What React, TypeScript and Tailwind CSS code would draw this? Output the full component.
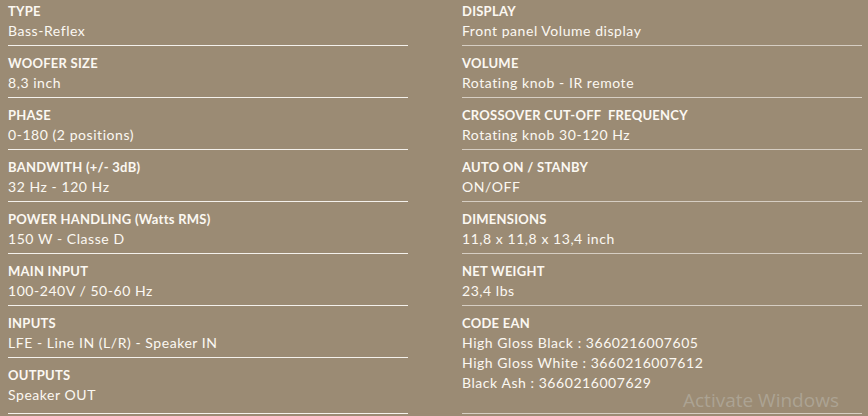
import React from 'react';

type Spec = {
  label: string;
  values: string[];
};

const leftSpecs: Spec[] = [
  { label: 'TYPE', values: ['Bass-Reflex'] },
  { label: 'WOOFER SIZE', values: ['8,3 inch'] },
  { label: 'PHASE', values: ['0-180 (2 positions)'] },
  { label: 'BANDWITH (+/- 3dB)', values: ['32 Hz - 120 Hz'] },
  { label: 'POWER HANDLING (Watts RMS)', values: ['150 W - Classe D'] },
  { label: 'MAIN INPUT', values: ['100-240V / 50-60 Hz'] },
  { label: 'INPUTS', values: ['LFE - Line IN (L/R) - Speaker IN'] },
  { label: 'OUTPUTS', values: ['Speaker OUT'] },
];

const rightSpecs: Spec[] = [
  { label: 'DISPLAY', values: ['Front panel Volume display'] },
  { label: 'VOLUME', values: ['Rotating knob - IR remote'] },
  { label: 'CROSSOVER CUT-OFF\u00a0 FREQUENCY', values: ['Rotating knob 30-120 Hz'] },
  { label: 'AUTO ON / STANBY', values: ['ON/OFF'] },
  { label: 'DIMENSIONS', values: ['11,8 x 11,8 x 13,4 inch'] },
  { label: 'NET WEIGHT', values: ['23,4 lbs'] },
  {
    label: 'CODE EAN',
    values: [
      'High Gloss Black : 3660216007605',
      'High Gloss White : 3660216007612',
      'Black Ash : 3660216007629',
    ],
  },
];

const SpecRow: React.FC<{ spec: Spec; last?: boolean; lineClass: string }> = ({ spec, last, lineClass }) => (
  <div className={`pt-[9px] border-b ${lineClass} ${last ? 'flex-1 pb-[8px]' : 'pb-[4px]'}`}>
    <div className="text-[13px] leading-[16px] font-bold tracking-[0.25px]">{spec.label}</div>
    <div className="mt-[2px] text-[14px] leading-[20px] font-normal tracking-[0.55px]">
      {spec.values.map((v, i) => (
        <div key={i}>{v}</div>
      ))}
    </div>
  </div>
);

const App: React.FC = () => {
  return (
    <div
      className="relative w-[868px] h-[416px] overflow-hidden bg-[#9b8b74] text-[#fbf8f2]"
      style={{ fontFamily: 'Lato, "Noto Sans", sans-serif' }}
    >
      <div className="flex gap-[54px] pl-[8px] -mt-[6px]">
        {/* Left column */}
        <div className="w-[400px] flex flex-col">
          {leftSpecs.map((spec, i) => (
            <SpecRow
              key={spec.label}
              spec={spec}
              last={i === leftSpecs.length - 1}
              lineClass="border-[#f4f1ec]"
            />
          ))}
        </div>

        {/* Right column */}
        <div className="w-[400px] flex flex-col">
          {rightSpecs.map((spec, i) => (
            <SpecRow
              key={spec.label}
              spec={spec}
              last={i === rightSpecs.length - 1}
              lineClass="border-[#d6cec3]"
            />
          ))}
        </div>
      </div>

      {/* Windows watermark */}
      <div
        className="absolute left-[683px] top-[388px] text-[19px] leading-[24px] text-[#aca393]"
        style={{ fontFamily: '"Open Sans", "Noto Sans", sans-serif' }}
      >
        Activate Windows
      </div>
    </div>
  );
};

export default App;
